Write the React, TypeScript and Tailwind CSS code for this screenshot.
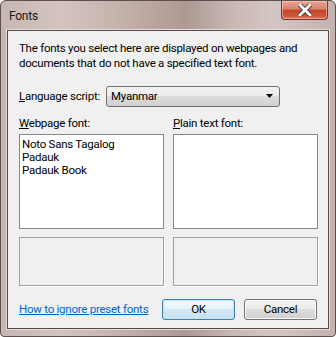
const fonts = ["Noto Sans Tagalog", "Padauk", "Padauk Book"];

function Glass() {
    return (
        <div className="relative h-[29px] w-full shrink-0">
            <span className="absolute left-[8px] top-[7px] text-[12px] leading-[16px] text-[#1a1a1a]">
                Fonts
            </span>
            {/* close button */}
            <div className="absolute right-[7px] top-0 flex h-[19px] w-[47px] items-center justify-center rounded-b-[4px] border border-t-0 border-[#6b3a32] bg-[linear-gradient(180deg,#e9a695_0%,#d9826c_45%,#c6432a_50%,#c9543a_80%,#e07a5e_100%)] shadow-[inset_0_0_0_1px_rgba(255,220,210,0.45)]">
                <svg width="14" height="12" viewBox="0 0 14 12">
                    <path
                        d="M2 1 L12 11 M12 1 L2 11"
                        stroke="#4a3c3a"
                        strokeWidth="4.6"
                        strokeLinecap="square"
                        fill="none"
                    />
                    <path
                        d="M2 1 L12 11 M12 1 L2 11"
                        stroke="#ffffff"
                        strokeWidth="2.8"
                        strokeLinecap="square"
                        fill="none"
                    />
                </svg>
            </div>
        </div>
    );
}

function WinButton({ label, focused }: { label: string; focused?: boolean }) {
    return (
        <div
            className={
                focused
                    ? "flex h-[21px] w-[73px] items-center justify-center rounded-[3px] border border-[#3c7fb1] bg-[linear-gradient(180deg,#f4fafd_0%,#e5f2f9_49%,#d3e8f4_50%,#c8e1f0_100%)] shadow-[inset_0_0_0_1px_#bfe6f8] text-[11.5px]"
                    : "flex h-[21px] w-[73px] items-center justify-center rounded-[3px] border border-[#707070] bg-[linear-gradient(180deg,#f2f2f2_0%,#ebebeb_49%,#dddddd_50%,#cfcfcf_100%)] shadow-[inset_0_0_0_1px_#fcfcfc] text-[11.5px]"
            }
        >
            {label}
        </div>
    );
}

export default function App() {
    return (
        <div
            className="relative flex h-[337px] w-[336px] flex-col overflow-hidden whitespace-nowrap rounded-t-[6px] rounded-b-[4px] border border-[#5c4f4c] bg-[linear-gradient(90deg,#c7b7b3_0%,#d3c4c0_18%,#c6b2ad_35%,#b49f9a_50%,#ad9893_55%,#c9b9b5_70%,#d4c6c3_82%,#c3b1ad_100%)] tracking-[-0.25px] text-black"
            style={{ fontFamily: 'Roboto, "Liberation Sans", sans-serif' }}
        >
            <Glass />
            <div className="mx-[6px] mb-[7px] flex flex-1 flex-col border border-[#564a48] bg-[#f0f0f0] px-[11px] shadow-[0_0_0_1px_#e6dcda]">
                <p className="mt-[10px] text-[11.5px] leading-[15px]">
                    The fonts you select here are displayed on webpages and
                    <br />
                    documents that do not have a specified text font.
                </p>
                <div className="mt-[15px] flex items-center">
                    <span className="w-[87px] text-[11.5px]">
                        <u>L</u>anguage script:
                    </span>
                    <div className="flex h-[21px] w-[174px] items-center justify-between rounded-[3px] border border-[#707070] bg-[linear-gradient(180deg,#f2f2f2_0%,#ebebeb_49%,#dddddd_50%,#cfcfcf_100%)] pl-[4px] pr-[5px] text-[11.5px]">
                        <span>Myanmar</span>
                        <svg width="8" height="5" viewBox="0 0 8 5">
                            <path d="M0 0 H7 L3.5 4 Z" fill="#000" />
                        </svg>
                    </div>
                </div>
                <div className="mt-[9px] grid grid-cols-[145px_145px] gap-x-[9px]">
                    <span className="text-[11.5px] leading-[15px]">
                        <u>W</u>ebpage font:
                    </span>
                    <span className="text-[11.5px] leading-[15px]">
                        <u>P</u>lain text font:
                    </span>
                    <div className="mt-[3px] flex h-[95px] flex-col border border-[#828790] bg-white px-[2px] pt-[3px] text-[11.5px] leading-[13px]">
                        {fonts.map((f) => (
                            <span key={f}>{f}</span>
                        ))}
                    </div>
                    <div className="mt-[3px] h-[95px] border border-[#828790] bg-white" />
                    <div className="mt-[8px] h-[49px] border border-[#a0a0a0] shadow-[1px_1px_0_#ffffff]" />
                    <div className="mt-[8px] h-[49px] border border-[#a0a0a0] shadow-[1px_1px_0_#ffffff]" />
                </div>
                <div className="mt-[13px] flex items-center">
                    <span className="w-[143px] text-[11.5px] text-[#0066cc] underline">
                        How to ignore preset fonts
                    </span>
                    <WinButton label="OK" focused />
                    <div className="w-[9px]" />
                    <WinButton label="Cancel" />
                </div>
            </div>
        </div>
    );
}
